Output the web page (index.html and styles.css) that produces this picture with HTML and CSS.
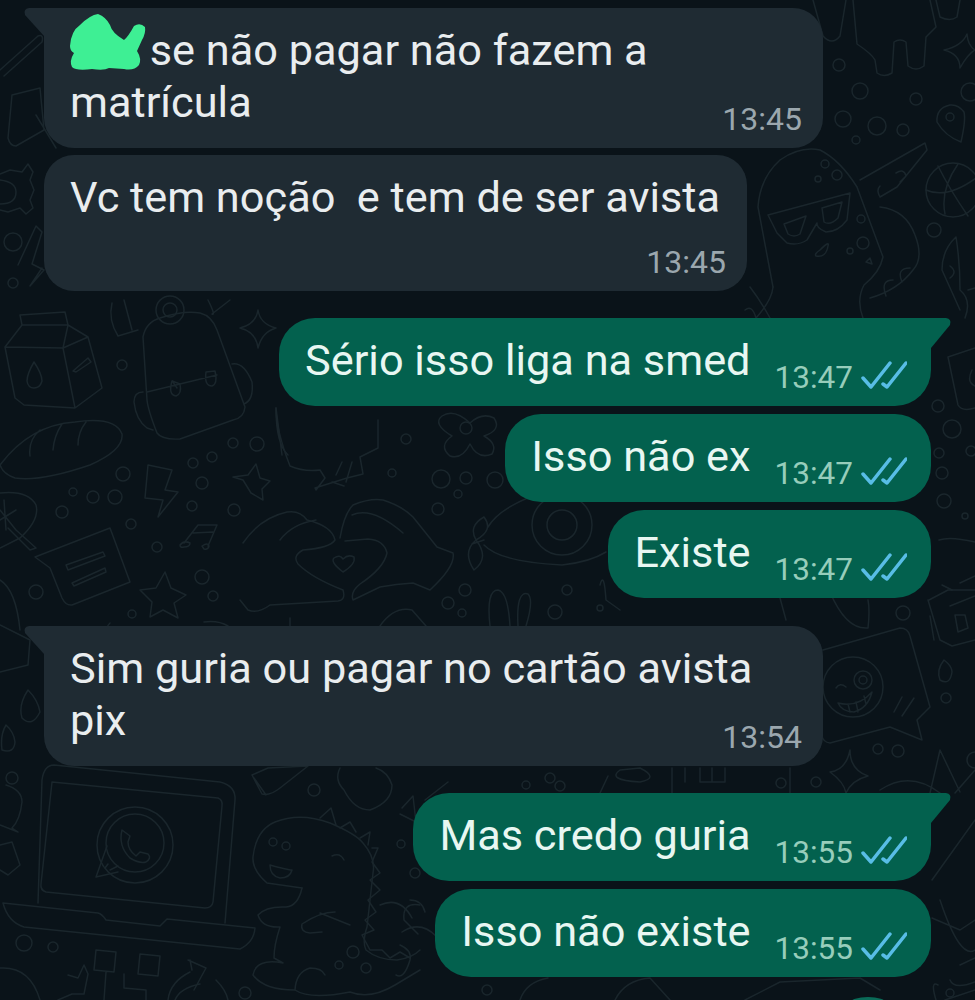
FILE: index.html
```html
<!DOCTYPE html>
<html lang="pt-BR">
<head>
  <meta charset="UTF-8">
  <meta name="viewport" content="width=device-width, initial-scale=1.0">
  <title>Conversa</title>
  <link rel="stylesheet" href="styles.css">
</head>
<body>
  <div class="screen">
    <!-- doodle wallpaper, sits behind the messages -->
    <svg class="wallpaper" viewBox="0 0 975 1000" aria-hidden="true">
      <!-- top left -->
      <path d="M0 70 L38 36 Q44 34 42 42 L4 76 M12 95 L40 88 L44 130 L16 146 Q10 146 8 138 Z M36 115 L56 148"/>
      <path d="M22 172 L28 164 L33 172 L30 180 L34 190 L30 200 L33 208 L26 214 L20 208 L8 212 L0 210 M0 174 L10 170 L22 172 M0 180 Q16 182 16 192 Q16 204 0 204"/>
      <circle cx="13" cy="242" r="9"/><circle cx="13" cy="283" r="5"/>
      <path d="M18 265 L36 226 L42 232 L32 264 L44 270 L30 286 L42 268"/>
      <!-- milk carton -->
      <path d="M20 315 L65 312 L68 325 L88 337 L102 388 L75 408 L24 405 L15 398 L5 347 L22 325 Z M22 325 L68 325 M5 347 L63 348 L68 325 M63 348 L88 337 M63 348 L75 408 M73 371 L88 358 L91 362 L76 372 Z M34 362 Q42 374 42 381 Q40 388 34 388 Q28 388 27 381 Q27 374 34 362 Z"/>
      <!-- backpack -->
      <path d="M143 337 Q146 322 160 318 Q184 310 200 313 Q212 316 217 330 L245 407 Q244 418 233 420 L180 439 Q162 440 157 433 Q148 410 147 400 Z"/>
      <path d="M147 392 L217 375 M177 388 Q170 378 174 382 M143 392 Q134 392 134 402 Q136 420 147 428 L153 430 M232 364 Q244 362 252 382 Q254 400 244 404 M172 381 Q168 395 176 396 Q182 394 180 384 Z M206 372 Q204 386 212 386 Q218 384 215 371 Z"/>
      <circle cx="170" cy="310" r="14"/><circle cx="170" cy="310" r="7"/>
      <path d="M112 303 Q108 320 118 336 L138 330 M124 300 L132 330 M208 300 Q216 316 212 314 L230 300"/>
      <path d="M258 310 Q260 324 276 328 Q262 332 258 348 Q256 332 240 328 Q256 324 258 310 Z"/>
      <!-- bread -->
      <path d="M0 465 Q30 425 75 422 Q115 416 122 434 Q124 450 90 465 Q40 482 15 478 Q3 474 0 465 Z M30 456 Q28 440 40 430 M53 450 Q54 436 62 424 M78 445 Q78 432 86 422"/>
      <!-- left circles and stars -->
      <g>
        <circle cx="122" cy="365" r="5"/><circle cx="233" cy="443" r="5"/><circle cx="257" cy="444" r="7"/>
        <circle cx="193" cy="463" r="5"/><circle cx="212" cy="457" r="5"/><circle cx="202" cy="483" r="6"/>
        <circle cx="192" cy="506" r="5"/><circle cx="234" cy="510" r="6"/><circle cx="123" cy="474" r="7"/>
        <circle cx="73" cy="492" r="4"/><circle cx="93" cy="497" r="6"/><circle cx="115" cy="497" r="7"/>
        <circle cx="62" cy="512" r="6"/><circle cx="131" cy="524" r="5"/><circle cx="157" cy="547" r="5"/>
        <circle cx="202" cy="577" r="7"/><circle cx="213" cy="596" r="5"/><circle cx="132" cy="614" r="4"/>
        <circle cx="36" cy="592" r="7"/>
      </g>
      <path d="M256 464 L260 478 L270 481 L262 489 L263 500 L251 493 L243 480 L233 477 L248 475 Z"/>
      <path d="M165 572 L171 588 L186 595 L174 603 L178 618 L163 610 L150 617 L152 602 L140 590 L156 588 Z"/>
      <path d="M148 465 L172 470 L165 490 L178 492 L158 517 L163 500 L145 498 Z"/>
      <path d="M184 543 L198 525 L217 525 L208 546 M193 533 L213 532 M180 545 Q184 540 190 543 Q190 547 184 547 Q180 548 180 545 Z M202 546 Q208 542 209 546 Q208 550 204 549 Z"/>
      <path d="M35 557 L110 528 L130 582 L72 605 Q66 606 62 598 L50 568 Z M66 565 L103 552 L105 556 L68 570 Z M72 583 L105 568 L106 572 L74 586 Z"/>
      <path d="M0 493 Q28 490 36 505 Q40 520 20 538 L0 548 M0 510 L16 530 L36 548 L30 550 L8 528 M0 520 L16 510 M4 500 L6 530"/>
      <path d="M0 580 Q16 590 20 630 M110 623 Q106 626 105 640 M204 622 Q218 620 228 626"/>
      <!-- boot and flower -->
      <path d="M276 408 Q276 430 290 466 Q304 472 320 470 L325 478 L316 490 L315 488 L347 478 L363 474 L360 457 L378 448 L378 420 M336 475 L342 462 M332 482 L344 486 M352 462 L346 482"/>
      <path d="M276 408 L282 455 M288 455 Q276 444 276 408"/>
      <circle cx="406" cy="439" r="5"/><circle cx="392" cy="473" r="4"/>
      <path d="M470 423 Q482 412 494 418 Q502 430 484 436 Q498 444 492 454 Q478 460 470 444 Q462 460 450 456 Q438 446 452 436 Q432 424 442 416 Q454 408 470 423 Z"/>
      <circle cx="466" cy="428" r="6"/>
      <circle cx="441" cy="479" r="9"/><circle cx="466" cy="478" r="6"/><circle cx="495" cy="480" r="8"/>
      <circle cx="458" cy="494" r="4"/><circle cx="438" cy="509" r="6"/>
      <!-- hands -->
      <path d="M243 543 Q260 518 287 512 Q300 510 307 520 Q332 526 335 540 Q330 548 303 550 Q292 556 298 564 Q312 578 343 590 Q346 600 338 601 L270 605 Q258 614 248 610 L240 600 M280 540 Q292 524 316 520"/>
      <path d="M340 538 Q344 514 353 505 Q370 498 383 500 Q402 506 413 517 L437 547 L453 553 Q456 566 430 590 L413 583 Q396 584 380 587 L353 600 Q350 592 360 584 Q384 568 387 553 Q384 540 368 539 L345 541 M352 515 Q372 506 403 533"/>
      <path d="M343 572 Q330 562 334 558 Q340 554 343 559 Q348 554 354 557 Q356 564 343 572 Z"/>
      <!-- candy, donut, bunny -->
      <path d="M484 517 Q494 530 476 540 Q468 526 484 517 Z M476 540 Q462 552 474 570 Q490 558 476 540 Z M472 544 L484 540 M488 527 Q498 510 530 497 M484 545 Q500 562 562 565 Q590 562 606 552"/>
      <circle cx="562" cy="525" r="30"/><circle cx="562" cy="525" r="15"/>
      <circle cx="465" cy="590" r="6"/><circle cx="448" cy="603" r="6"/><circle cx="462" cy="613" r="4"/>
      <path d="M490 626 Q486 590 498 590 Q508 592 510 626 M518 626 Q516 590 528 594 Q534 600 526 626"/>
      <circle cx="567" cy="590" r="5"/><circle cx="555" cy="612" r="7"/><circle cx="600" cy="608" r="3"/>
      <path d="M600 585 Q604 570 606 600 L620 610 M380 626 Q394 606 412 610 L426 626 M290 626 L290 618"/>
      <!-- laptop and logo -->
      <path d="M38 903 L42 780 Q44 765 54 765 L220 782 Q236 786 235 800 L225 923"/>
      <path d="M52 782 L218 798 Q223 800 222 806 L213 902 Q212 908 205 908 L46 892 Q40 890 41 884 Z"/>
      <path d="M3 903 L98 913 Q102 914 106 920 L160 926 L167 919 L255 928 Q254 942 240 949 L24 927 Q8 922 3 903 Z"/>
      <circle cx="135" cy="845" r="38"/><circle cx="135" cy="843" r="29"/>
      <path d="M96 877 L107 846 M96 877 L118 872 M105 868 L108 864 M110 870 L118 866"/>
      <path d="M122 830 Q118 846 130 858 Q140 864 146 862 Q152 858 148 854 L140 852 L136 856 Q128 850 128 842 L130 836 Z"/>
      <!-- left of the laptop -->
      <circle cx="12" cy="778" r="6"/>
      <path d="M6 785 Q22 790 22 802 Q20 820 12 828 L18 832 L0 825 M0 845 L12 842 L20 865 L8 875 L0 870"/>
      <circle cx="24" cy="943" r="8"/><circle cx="53" cy="947" r="5"/>
      <path d="M0 968 Q30 966 40 1000 M68 975 L78 978 L84 965 L88 974 L84 994 L72 994 L58 1000"/>
      <path d="M96 950 L116 952 L114 972 L94 970 Z M140 954 L160 956 L158 976 L138 974 Z M106 972 L104 1000 M124 974 L124 988 L146 990 L146 1000"/>
      <path d="M168 1000 Q170 982 190 972 M188 960 L206 968 L194 990 M190 960 L192 970 M175 1000 Q180 988 200 984 M216 980 Q226 990 228 1000"/>
      <circle cx="245" cy="993" r="6"/>
      <!-- left column below the incoming message -->
      <path d="M0 625 L30 640 L28 665 L0 672 M28 690 Q18 705 22 718 Q32 728 40 712 Q38 700 28 690 Z M6 725 Q0 735 2 750 Q14 754 15 742 Q14 732 6 725 Z"/>
      <!-- bottom middle blobs -->
      <path d="M252 775 L268 768 L308 766 L280 788 Q270 796 262 794 Z M254 778 L266 795"/>
      <circle cx="314" cy="790" r="6"/>
      <path d="M340 768 Q334 780 344 790 Q354 810 370 810 Q392 802 392 785 Q388 772 376 768"/>
      <!-- dinosaur -->
      <path d="M302 888 L267 883 Q252 870 253 857 Q256 830 275 822 Q300 812 330 823 Q356 834 363 843 Q376 858 373 873 L367 927 Q362 942 366 950 Q378 960 397 960 Q412 958 420 950"/>
      <path d="M320 818 L331 808 L336 825 M340 828 L350 822 L356 832 M360 838 L370 832 L368 845 M372 848 L378 848 L372 862 L380 873 L370 880 L380 890 L368 900 L376 912 L365 920 L374 930 L362 935 L370 950 L382 950 L390 958 L400 952 L410 958"/>
      <path d="M302 888 Q298 906 286 907 Q266 906 258 915 Q262 928 280 927 Q274 945 274 958 L283 963 Q256 958 253 975 Q264 990 295 990 Q296 972 310 968 Q322 968 325 975 M295 990 Q310 1000 350 992 Q370 1000 395 985 L420 970"/>
      <path d="M335 912 Q320 912 302 924 Q300 932 310 933 L322 932 M320 913 L350 925 M332 856 Q340 852 344 860 M270 865 Q288 870 292 870 Q290 878 280 878 Q270 876 270 865 Z"/>
      <circle cx="273" cy="842" r="4"/><circle cx="286" cy="846" r="4"/>
      <circle cx="353" cy="952" r="6"/><circle cx="339" cy="965" r="4"/><circle cx="366" cy="968" r="5"/>
      <circle cx="401" cy="844" r="4"/><circle cx="415" cy="873" r="5"/>
      <path d="M402 808 L413 796 L416 822 L400 814 M420 905 Q402 902 404 920 L418 934"/>
      <!-- right side, top -->
      <path d="M813 0 L823 36 Q832 46 840 36 L846 0 M853 0 L857 44 Q872 54 875 60 L877 73 Q884 78 892 73 L894 42 Q900 38 906 42 L908 66 Q916 72 924 66 L926 37 L936 27 L930 0 M936 0 L940 17 Q950 22 957 17 L960 0"/>
      <path d="M967 34 Q968 46 975 50 Q968 54 960 68 Q960 54 944 50 Q962 46 967 34 Z"/>
      <circle cx="839" cy="65" r="6"/><circle cx="860" cy="91" r="8"/><circle cx="843" cy="119" r="8"/>
      <circle cx="877" cy="126" r="9"/><circle cx="903" cy="130" r="6"/><circle cx="856" cy="140" r="4"/>
      <circle cx="916" cy="99" r="6"/><circle cx="970" cy="92" r="9"/>
      <path d="M950 105 Q936 108 937 122 Q945 136 961 142 Q966 120 964 112 Q958 104 950 105 Z"/><circle cx="950" cy="117" r="4"/>
      <circle cx="953" cy="190" r="27"/>
      <path d="M926 190 Q948 200 980 175 M938 166 Q950 190 968 216 M958 164 Q940 190 945 214"/>
      <circle cx="934" cy="230" r="7"/>
      <!-- ghost with sunglasses -->
      <path d="M773 287 L758 207 Q760 178 780 160 Q800 146 820 150 Q840 160 857 187 L883 257 Q880 272 864 285 Q856 300 863 318"/>
      <path d="M768 215 L850 193 L847 220 Q838 232 826 232 Q816 228 817 223 L807 240 Q798 246 787 243 L777 233 Z M784 224 L806 216 L800 234 Q794 238 788 234 Z M822 208 L842 202 L838 218 Q830 226 824 222 Z"/>
      <circle cx="825" cy="164" r="4"/><circle cx="837" cy="175" r="5"/><circle cx="818" cy="179" r="3"/>
      <circle cx="861" cy="219" r="4"/><circle cx="863" cy="243" r="6"/><circle cx="850" cy="251" r="3"/>
      <path d="M820 250 Q830 240 828 246 Q826 258 816 256 Q814 254 820 250 Z M866 262 L870 258 L872 264 Z"/>
      <path d="M860 180 L925 143 L927 150 L897 187 L880 197 Q876 190 880 186 M896 173 Q904 168 906 176 L900 182"/>
      <path d="M880 207 Q906 210 915 235 Q924 258 913 270 Q898 290 870 298 M910 268 Q896 268 902 282 M893 280 Q880 280 886 296"/>
      <path d="M956 237 Q942 250 942 270 L960 310 M956 237 Q960 262 960 290 Q972 300 965 318 M950 266 Q958 272 950 278 M968 290 L975 288"/>
      <path d="M750 287 Q760 300 770 318 M756 318 Q772 300 773 287 M745 310 Q752 304 756 318"/>
      <!-- right edge -->
      <path d="M948 357 L975 348 M948 357 L958 405 Q962 412 975 408 M972 370 Q966 382 975 386"/>
      <circle cx="938" cy="406" r="6"/><circle cx="952" cy="429" r="9"/><circle cx="939" cy="453" r="5"/>
      <circle cx="971" cy="451" r="5"/><circle cx="942" cy="473" r="6"/><circle cx="944" cy="501" r="7"/><circle cx="965" cy="516" r="3"/>
      <path d="M939 540 Q950 536 975 542 M960 583 L975 576 M942 585 L952 590 M950 606 L975 596 M955 615 L965 615 L968 628 L958 632 Z M930 616 L934 640"/>
      <path d="M929 600 L948 590 L975 590 M975 640 L952 646 L940 640 L928 600"/>
      <!-- wink face and speech bubble -->
      <circle cx="853" cy="687" r="30"/><circle cx="863" cy="680" r="9"/><circle cx="863" cy="680" r="4"/>
      <path d="M836 688 Q840 682 846 687 M838 703 Q858 708 872 692 Q868 708 854 712 Q842 712 838 703 Z M848 704 L850 712 M856 702 L858 712 M864 696 L866 704"/>
      <path d="M823 650 L900 628 Q908 628 910 636 L930 707 L917 720 L922 740 L890 727 L830 743 Q823 742 822 736 M894 712 L902 697 M902 716 L914 698"/>
      <path d="M944 660 Q936 670 940 680 Q950 686 952 672 Q952 666 944 660 Z"/><circle cx="946" cy="698" r="5"/>
      <circle cx="878" cy="749" r="5"/><circle cx="898" cy="751" r="6"/>
      <circle cx="903" cy="613" r="7"/>
      <path d="M830 592 Q846 630 868 628 Q870 610 868 600 M780 598 L786 620"/>
      <path d="M850 750 Q850 770 868 776 Q852 780 846 793 Q844 782 830 772 Q846 770 850 750 Z"/>
      <circle cx="816" cy="782" r="5"/><circle cx="781" cy="783" r="5"/>
      <path d="M880 790 Q910 770 940 793 M930 793 L940 750 L960 792 M955 793 L975 770"/>
      <circle cx="975" cy="760" r="8"/>
      <path d="M620 770 Q606 780 640 782 Q660 778 640 768 Z M672 768 L672 793 M608 776 L600 793 M700 768 L700 782 L725 782 L725 768 M685 768 L685 782 M712 768 L712 782"/>
      <circle cx="560" cy="786" r="5"/><circle cx="526" cy="785" r="4"/><circle cx="550" cy="778" r="5"/>
      <path d="M790 768 L790 793 M448 782 L425 800"/>
      <!-- bottom right -->
      <path d="M932 880 L975 820 M940 900 Q960 960 975 950 M932 918 L960 930 L975 920"/>
      <path d="M960 965 L975 958 M950 980 Q954 990 975 982 M945 1000 L975 990 M938 985 Q930 980 936 1000"/>
      <circle cx="950" cy="993" r="4"/>
      <path d="M380 905 Q400 896 412 918 M400 945 Q412 950 410 960 Q404 980 396 975"/>
      <path d="M402 932 Q420 920 436 936 M410 900 Q422 900 425 912"/>
      <circle cx="487" cy="990" r="5"/>
      <path d="M520 1000 Q526 982 548 978 M615 1000 Q625 980 650 978 L670 1000 M745 1000 L780 982 L860 978 M860 978 L880 990"/>
      <ellipse class="wallpaper-bubble" cx="868" cy="1003" rx="18" ry="6"/>
    </svg>

    <main class="chat">
      <div class="msg msg-in has-tail tight-time">
        <p class="msg-text"><span class="scribble"><svg viewBox="0 0 78 58" aria-hidden="true"><path d="M2 33 Q3 18 12 12 Q22 2 30 1 Q38 4 42 12 Q44 20 56 27 Q60 24 66 13 Q72 9 77 14 Q78 20 74 27 L69 38 Q74 46 71 52 Q66 58 56 56 L41 55 Q36 58 24 56 Q8 58 4 54 Q1 48 6 40 Q2 38 2 33 Z"/></svg></span> se não pagar não fazem a matrícula</p>
        <div class="msg-meta"><span class="msg-time">13:45</span></div>
      </div>
      <div class="msg msg-in">
        <p class="msg-text">Vc tem noção&nbsp; e tem de ser avista</p>
        <div class="msg-meta"><span class="msg-time">13:45</span></div>
      </div>

      <div class="msg msg-out has-tail new-group">
        <p class="msg-text">Sério isso liga na smed</p>
        <div class="msg-meta"><span class="msg-time">13:47</span>
          <svg class="ticks" viewBox="0 0 46 28" aria-hidden="true"><path d="M2 17 L10 26 L29 2 M22 23 L26 26 L45 2"/></svg>
        </div>
      </div>
      <div class="msg msg-out">
        <p class="msg-text">Isso não ex</p>
        <div class="msg-meta"><span class="msg-time">13:47</span>
          <svg class="ticks" viewBox="0 0 46 28" aria-hidden="true"><path d="M2 17 L10 26 L29 2 M22 23 L26 26 L45 2"/></svg>
        </div>
      </div>
      <div class="msg msg-out">
        <p class="msg-text">Existe</p>
        <div class="msg-meta"><span class="msg-time">13:47</span>
          <svg class="ticks" viewBox="0 0 46 28" aria-hidden="true"><path d="M2 17 L10 26 L29 2 M22 23 L26 26 L45 2"/></svg>
        </div>
      </div>

      <div class="msg msg-in has-tail tight-time new-group">
        <p class="msg-text">Sim guria ou pagar no cartão avista pix</p>
        <div class="msg-meta"><span class="msg-time">13:54</span></div>
      </div>

      <div class="msg msg-out has-tail new-group">
        <p class="msg-text">Mas credo guria</p>
        <div class="msg-meta"><span class="msg-time">13:55</span>
          <svg class="ticks" viewBox="0 0 46 28" aria-hidden="true"><path d="M2 17 L10 26 L29 2 M22 23 L26 26 L45 2"/></svg>
        </div>
      </div>
      <div class="msg msg-out">
        <p class="msg-text">Isso não existe</p>
        <div class="msg-meta"><span class="msg-time">13:55</span>
          <svg class="ticks" viewBox="0 0 46 28" aria-hidden="true"><path d="M2 17 L10 26 L29 2 M22 23 L26 26 L45 2"/></svg>
        </div>
      </div>
    </main>
  </div>
</body>
</html>
```

FILE: styles.css
```css
/* Reset and Base Styles */
* {
  margin: 0;
  padding: 0;
  box-sizing: border-box;
}

body {
  font-family: 'Roboto', 'Liberation Sans', sans-serif;
  background-color: #0a1319;
}

.screen {
  position: relative;
  height: 1000px;
  overflow: hidden;
}

/* Wallpaper */
.wallpaper {
  position: absolute;
  top: 0;
  left: 0;
  width: 975px;
  height: 1000px;
  fill: none;
  stroke: #1a262c;
  stroke-width: 1.5;
  stroke-linecap: round;
  stroke-linejoin: round;
}

.wallpaper-bubble {
  fill: #0a6b58;
  stroke: none;
}

/* Messages */
.chat {
  position: relative;
  display: flex;
  flex-direction: column;
  gap: 8px;
  padding: 8px 44px 0;
}

.msg {
  position: relative;
}

.msg-text {
  font-size: 43.3px;
  line-height: 52px;
}

.msg-time {
  font-size: 32px;
  line-height: 34px;
}

.new-group {
  margin-top: 19px;
}

/* Incoming */
.msg-in {
  align-self: flex-start;
  max-width: 779px;
  padding: 17px 27px 12px 26px;
  border-radius: 30px;
  background: #1f2b33;
  color: #e9edef;
}

.msg-in + .msg-in {
  margin-top: -1px;
}

.msg-out + .msg-in.new-group {
  margin-top: 20px;
}

.msg-in .msg-meta {
  display: flex;
  justify-content: flex-end;
  margin-top: 21px;
  margin-right: -6px;
  color: #9ba7ae;
}

.msg-in.tight-time .msg-meta {
  margin-top: -27px;
}

.msg-in.has-tail {
  border-top-left-radius: 0;
}

.msg-in.has-tail::before {
  content: "";
  position: absolute;
  top: 0;
  left: -20px;
  width: 20px;
  height: 28px;
  background: #1f2b33;
  clip-path: path("M5 0 L20 0 L20 28 L1 7 Q-1 1 5 0 Z");
}

/* Outgoing */
.msg-out {
  align-self: flex-end;
  display: flex;
  gap: 24px;
  padding: 17px 24px 11px 26px;
  border-radius: 36px;
  background: #03614e;
  color: #e8f7f2;
}

.msg-out .msg-text {
  margin-bottom: 8px;
}

.msg-out .msg-meta {
  display: flex;
  align-items: center;
  gap: 8px;
  margin-top: 26px;
  color: #97cdbb;
}

.msg-out .msg-time {
  font-size: 31.5px;
}

.msg-out.has-tail {
  border-top-right-radius: 0;
}

.msg-out.has-tail::before {
  content: "";
  position: absolute;
  top: 0;
  right: -20px;
  width: 20px;
  height: 30px;
  background: #03614e;
  clip-path: path("M0 0 L15 0 Q21 1 19 7 L0 30 Z");
}

.ticks {
  width: 46px;
  height: 28px;
  margin-top: -6px;
  fill: none;
  stroke: #58bde6;
  stroke-width: 3.5;
  stroke-linecap: round;
  stroke-linejoin: round;
}

/* Marker over the hidden name */
.scribble {
  position: relative;
  display: inline-block;
  width: 69px;
  height: 0;
}

.scribble svg {
  position: absolute;
  top: -52px;
  left: -2px;
  width: 78px;
  height: 58px;
  fill: #3eef94;
}
```
